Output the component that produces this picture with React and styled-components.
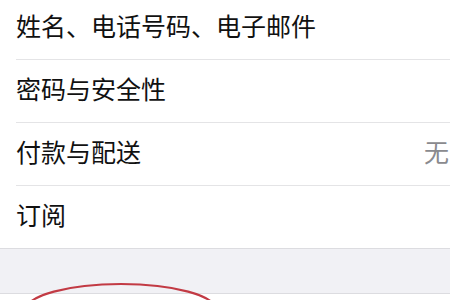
import React from 'react';
import styled, { createGlobalStyle } from 'styled-components';

const GlobalStyle = createGlobalStyle`
  html, body {
    margin: 0;
    padding: 0;
    background: #ffffff;
  }
  body {
    width: 450px;
    height: 300px;
    overflow: hidden;
    font-family: "Noto Sans CJK SC", "Noto Sans", sans-serif;
  }
`;

const Screen = styled.div`
  position: relative;
  width: 450px;
  height: 300px;
  overflow: hidden;
  background: #ffffff;
`;

const List = styled.ul`
  list-style: none;
  margin: -3px 0 0;
  padding: 0 0 0 16px;
  background: #ffffff;
  border-bottom: 1px solid #dcdce0;
`;

// 62px of content; the separator sits below it
const Row = styled.li`
  display: flex;
  align-items: center;
  justify-content: space-between;
  height: 57px;
  padding-bottom: 5px;
  border-bottom: ${(p) => (p.$last ? 'none' : '1px solid #e4e4e6')};
  font-size: 25px;
  line-height: 1;
  color: #111111;
`;

const Label = styled.span`
  white-space: nowrap;
`;

const Value = styled.span`
  color: #8a8a8e;
  white-space: nowrap;
  margin-right: 1px;
`;

const Gap = styled.div`
  height: 44px;
  background: #f1f1f5;
  border-bottom: 1px solid #dcdce0;
`;

const Section = styled.div`
  height: 20px;
  background: #ffffff;
`;

const Mark = styled.svg`
  position: absolute;
  left: 0;
  top: 0;
  pointer-events: none;
`;

const rows = [
  { label: '姓名、电话号码、电子邮件' },
  { label: '密码与安全性' },
  { label: '付款与配送', value: '无' },
  { label: '订阅' },
];

const App = () => (
  <Screen>
    <GlobalStyle />
    <List>
      {rows.map((r, i) => (
        <Row key={r.label} $last={i === rows.length - 1}>
          <Label>{r.label}</Label>
          {r.value && <Value>{r.value}</Value>}
        </Row>
      ))}
    </List>
    <Gap />
    <Section />
    <Mark width="450" height="300" viewBox="0 0 450 300">
      <ellipse cx="121" cy="310" rx="95" ry="26" fill="none" stroke="#c23a44" strokeWidth="2.2" />
    </Mark>
  </Screen>
);

export default App;
